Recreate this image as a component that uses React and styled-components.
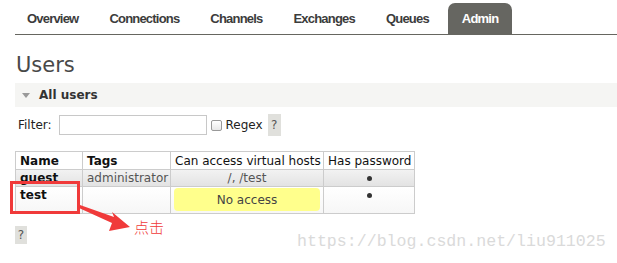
import React from "react";
import styled, { createGlobalStyle } from "styled-components";

const Global = createGlobalStyle`
  html, body { margin: 0; padding: 0; background: #fff; }
  body { font-family: "DejaVu Sans", Verdana, sans-serif; font-size: 12px; color: #222; }
`;

const Page = styled.div`
  position: relative;
  width: 617px;
  height: 263px;
  overflow: hidden;
  padding-top: 3px;
  box-sizing: border-box;
`;

const Nav = styled.ul`
  display: flex;
  gap: 7px;
  list-style: none;
  margin: 0 0 0 15px;
  padding: 0;
  height: 31px;
  border-bottom: 1px solid #666660;
`;

const Tab = styled.li`
  display: flex;
  align-items: center;
  padding: 0 ${p => (p.$active ? "14px" : "12px")};
  height: 31px;
  font-family: "Liberation Sans", Arial, sans-serif;
  font-weight: bold;
  font-size: 13px;
  letter-spacing: -0.8px;
  color: ${p => (p.$active ? "#fff" : "#3c3c3c")};
  background: ${p => (p.$active ? "#666661" : "transparent")};
  border-radius: 7px 7px 0 0;
`;

const Main = styled.div`
  padding-left: 15px;
`;

const Title = styled.h1`
  margin: 17px 0 0 1px;
  font-size: 21px;
  line-height: 26px;
  font-weight: normal;
  color: #484848;
`;

const SectionBar = styled.div`
  margin-top: 5px;
  height: 24px;
  background: #f5f5f3;
  display: flex;
  align-items: center;
  padding-left: 7px;
  gap: 9px;
  font-weight: bold;
  font-size: 12px;
  color: #333;
`;

const Triangle = styled.span`
  width: 0;
  height: 0;
  border-left: 4px solid transparent;
  border-right: 4px solid transparent;
  border-top: 5px solid #999;
  margin-top: 1px;
`;

const FilterRow = styled.div`
  margin-top: 7px;
  height: 22px;
  display: flex;
  align-items: center;
  padding-left: 3px;
  color: #222;
`;

const Label = styled.span`
  margin-right: 7px;
`;

const Input = styled.div`
  width: 146px;
  height: 18px;
  border: 1px solid #c8c8c8;
  background: #fff;
`;

const Check = styled.span`
  width: 9px;
  height: 9px;
  border: 1px solid #999;
  border-radius: 2px;
  background: linear-gradient(#fff, #e8e8e8);
  margin: 0 4px 0 4px;
`;

const Help = styled.span`
  display: inline-flex;
  align-items: center;
  justify-content: center;
  width: ${p => p.$w || 13}px;
  height: ${p => p.$h || 22}px;
  background: #e0e0dc;
  color: #555;
  font-size: 12px;
  margin-left: ${p => p.$ml || 0}px;
`;

const Table = styled.table`
  margin-top: 15px;
  border-collapse: collapse;
  table-layout: fixed;
  width: 399px;
  font-size: 12px;
`;

const Th = styled.th`
  border: 1px solid #ccc;
  padding: 0 4px;
  height: 17px;
  text-align: ${p => (p.$left ? "left" : "center")};
  font-weight: ${p => (p.$bold ? "bold" : "normal")};
  color: #111;
  white-space: nowrap;
  background: #fff;
`;

const Row = styled.tr`
  background: ${p =>
    p.$alt ? "linear-gradient(#f2f2f2, #e2e2e2)" : "linear-gradient(#fff, #f6f6f6)"};
`;

const Td = styled.td`
  border: 1px solid #ccc;
  padding: ${p => (p.$tight ? "1px 3px" : "0 4px")};
  height: ${p => p.$h || 16}px;
  vertical-align: top;
  text-align: ${p => (p.$center ? "center" : "left")};
  font-weight: ${p => (p.$bold ? "bold" : "normal")};
  color: ${p => (p.$muted ? "#555" : "#111")};
  white-space: nowrap;
  line-height: 16px;
`;

const NoAccess = styled.div`
  height: 23px;
  border-radius: 4px;
  background: #ffff8c;
  color: #444;
  display: flex;
  align-items: center;
  justify-content: center;
`;

const Dot = styled.span`
  display: inline-block;
  width: 5px;
  height: 5px;
  border-radius: 50%;
  background: #333;
  vertical-align: middle;
`;

const Footer = styled.div`
  margin-top: 12px;
`;

const Highlight = styled.div`
  position: absolute;
  left: 10px;
  top: 181px;
  width: 64px;
  height: 27px;
  border: 3px solid #f03a3a;
`;

const Arrow = styled.svg`
  position: absolute;
  left: 78px;
  top: 200px;
`;

const Note = styled.span`
  position: absolute;
  left: 134px;
  top: 216px;
  font-family: "Noto Sans CJK SC", sans-serif;
  font-weight: 300;
  font-size: 15px;
  color: #f03a3a;
`;

const Watermark = styled.span`
  position: absolute;
  left: 297px;
  top: 232px;
  font-family: "Liberation Mono", monospace;
  font-size: 16.6px;
  color: #dadada;
`;

export default function App() {
  const tabs = ["Overview", "Connections", "Channels", "Exchanges", "Queues", "Admin"];
  return (
    <Page>
      <Global />
      <Nav>
        {tabs.map(t => (
          <Tab key={t} $active={t === "Admin"}>{t}</Tab>
        ))}
      </Nav>
      <Main>
        <Title>Users</Title>
        <SectionBar>
          <Triangle />
          All users
        </SectionBar>
        <FilterRow>
          <Label>Filter:</Label>
          <Input />
          <Check />
          Regex
          <Help $ml={5}>?</Help>
        </FilterRow>
        <Table>
          <colgroup>
            <col style={{ width: 67 }} />
            <col style={{ width: 88 }} />
            <col style={{ width: 153 }} />
            <col style={{ width: 91 }} />
          </colgroup>
          <thead>
            <tr>
              <Th $left $bold>Name</Th>
              <Th $left $bold>Tags</Th>
              <Th>Can access virtual hosts</Th>
              <Th>Has password</Th>
            </tr>
          </thead>
          <tbody>
            <Row $alt>
              <Td $bold>guest</Td>
              <Td $muted>administrator</Td>
              <Td $center $muted>/, /test</Td>
              <Td $center><Dot /></Td>
            </Row>
            <Row>
              <Td $bold $h={26}>test</Td>
              <Td />
              <Td $tight><NoAccess>No access</NoAccess></Td>
              <Td $center><Dot /></Td>
            </Row>
          </tbody>
        </Table>
        <Footer>
          <Help $w={12} $h={18}>?</Help>
        </Footer>
      </Main>
      <Highlight />
      <Arrow width="56" height="34" viewBox="0 0 56 34">
        <polygon points="2,5 36,17 34,12 52,27 31,31 34,23 1,8" fill="#f03a3a" />
      </Arrow>
      <Note>点击</Note>
      <Watermark>https://blog.csdn.net/liu911025</Watermark>
    </Page>
  );
}
